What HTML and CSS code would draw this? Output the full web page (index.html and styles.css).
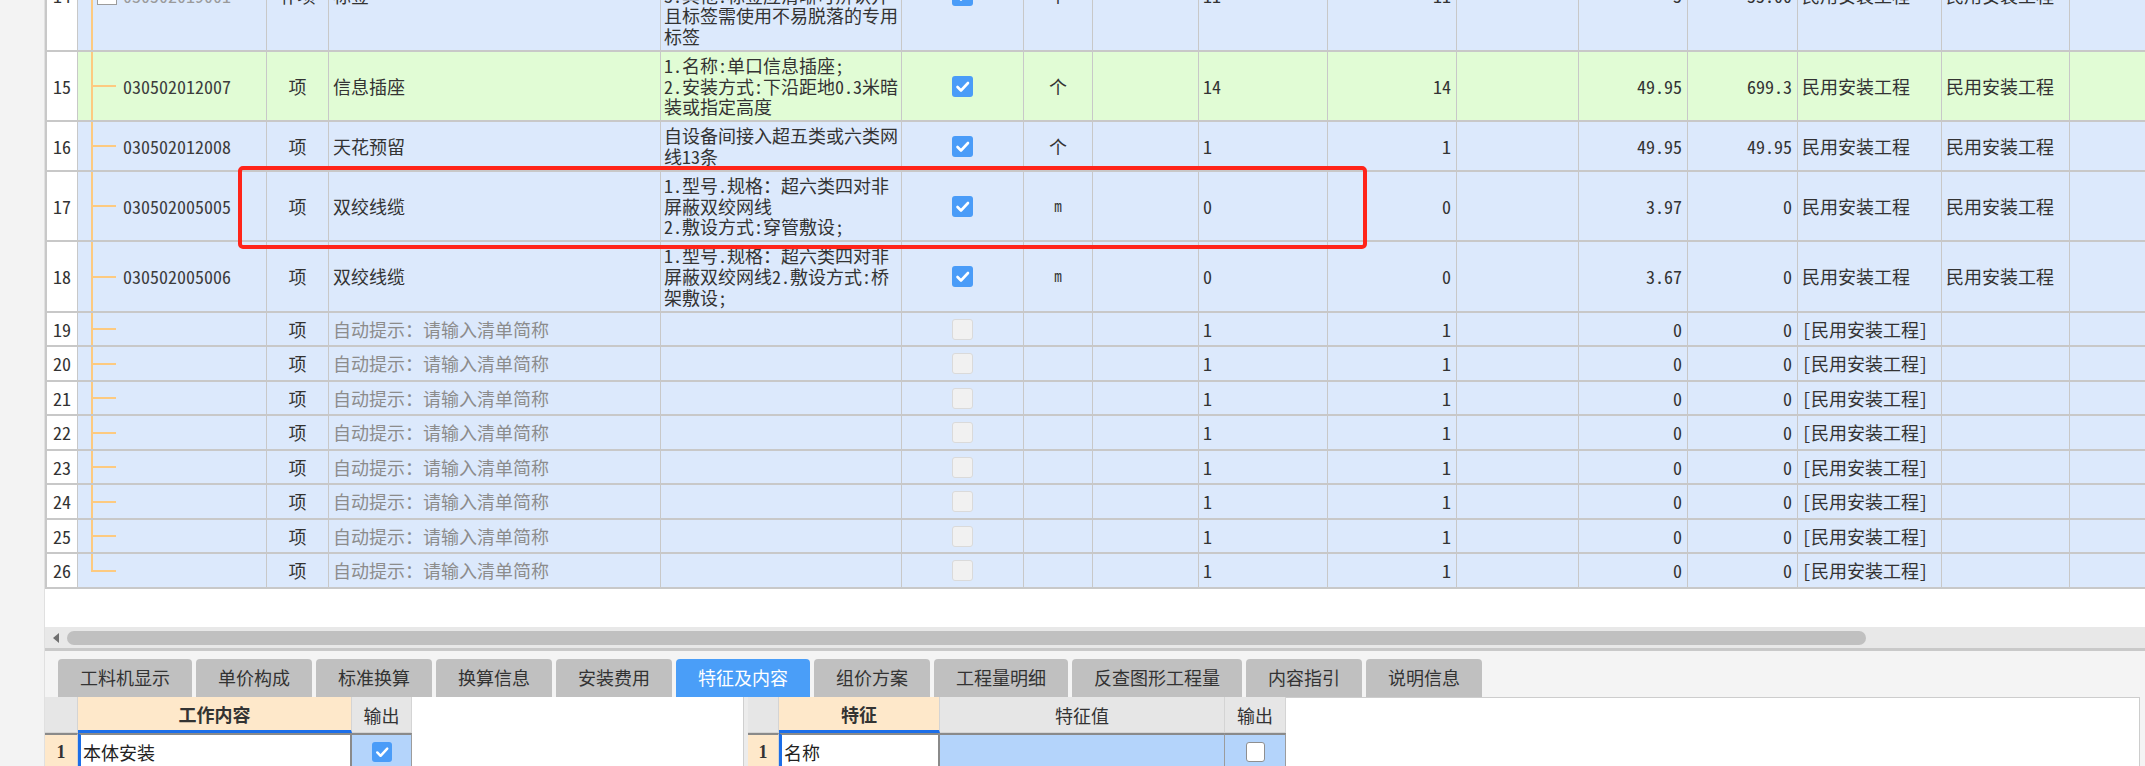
FILE: index.html
```html
<!DOCTYPE html>
<html lang="zh-CN">
<head>
<meta charset="utf-8">
<title>清单编辑</title>
<link rel="stylesheet" href="styles.css">
</head>
<body>
<div class="page">
  <div class="strip"></div>
  <div class="main">
    <div class="table-area">
      <div class="table">
        <div class="row h112">
          <div class="c rn">14</div>
          <div class="c code"><span class="tree nostub"></span><span class="box"></span><span class="gray">030502019001</span></div>
          <div class="c ctr">补项</div>
          <div class="c">标签</div>
          <div class="c desc">1.名称:标签<br>2.规格:线缆两端编号标识<br>3.其他:标签应清晰可辨认并<br>且标签需使用不易脱落的专用<br>标签</div>
          <div class="c ctr"><span class="cb on"><svg viewBox="0 0 21 21" width="21" height="21"><path d="M5.5 11l3.5 3.5 7-7.5" fill="none" stroke="#fff" stroke-width="2.6" stroke-linecap="round" stroke-linejoin="round"/></svg></span></div>
          <div class="c ctr">个</div>
          <div class="c"></div>
          <div class="c">11</div>
          <div class="c r">11</div>
          <div class="c"></div>
          <div class="c r">5</div>
          <div class="c r">55.00</div>
          <div class="c">民用安装工程</div>
          <div class="c">民用安装工程</div>
          <div class="c end"></div>
        </div>
        <div class="row green h70">
          <div class="c rn">15</div>
          <div class="c code"><span class="tree"></span>030502012007</div>
          <div class="c ctr">项</div>
          <div class="c">信息插座</div>
          <div class="c desc">1.名称:单口信息插座;<br>2.安装方式:下沿距地0.3米暗<br>装或指定高度</div>
          <div class="c ctr"><span class="cb on"><svg viewBox="0 0 21 21" width="21" height="21"><path d="M5.5 11l3.5 3.5 7-7.5" fill="none" stroke="#fff" stroke-width="2.6" stroke-linecap="round" stroke-linejoin="round"/></svg></span></div>
          <div class="c ctr">个</div>
          <div class="c"></div>
          <div class="c">14</div>
          <div class="c r">14</div>
          <div class="c"></div>
          <div class="c r">49.95</div>
          <div class="c r">699.3</div>
          <div class="c">民用安装工程</div>
          <div class="c">民用安装工程</div>
          <div class="c end"></div>
        </div>
        <div class="row h50">
          <div class="c rn">16</div>
          <div class="c code"><span class="tree"></span>030502012008</div>
          <div class="c ctr">项</div>
          <div class="c">天花预留</div>
          <div class="c desc">自设备间接入超五类或六类网<br>线13条</div>
          <div class="c ctr"><span class="cb on"><svg viewBox="0 0 21 21" width="21" height="21"><path d="M5.5 11l3.5 3.5 7-7.5" fill="none" stroke="#fff" stroke-width="2.6" stroke-linecap="round" stroke-linejoin="round"/></svg></span></div>
          <div class="c ctr">个</div>
          <div class="c"></div>
          <div class="c">1</div>
          <div class="c r">1</div>
          <div class="c"></div>
          <div class="c r">49.95</div>
          <div class="c r">49.95</div>
          <div class="c">民用安装工程</div>
          <div class="c">民用安装工程</div>
          <div class="c end"></div>
        </div>
        <div class="row h70">
          <div class="c rn">17</div>
          <div class="c code"><span class="tree"></span>030502005005</div>
          <div class="c ctr">项</div>
          <div class="c">双绞线缆</div>
          <div class="c desc">1.型号.规格：超六类四对非<br>屏蔽双绞网线<br>2.敷设方式:穿管敷设;</div>
          <div class="c ctr"><span class="cb on"><svg viewBox="0 0 21 21" width="21" height="21"><path d="M5.5 11l3.5 3.5 7-7.5" fill="none" stroke="#fff" stroke-width="2.6" stroke-linecap="round" stroke-linejoin="round"/></svg></span></div>
          <div class="c ctr unit-m">m</div>
          <div class="c"></div>
          <div class="c">0</div>
          <div class="c r">0</div>
          <div class="c"></div>
          <div class="c r">3.97</div>
          <div class="c r">0</div>
          <div class="c">民用安装工程</div>
          <div class="c">民用安装工程</div>
          <div class="c end"></div>
        </div>
        <div class="row h71">
          <div class="c rn">18</div>
          <div class="c code"><span class="tree"></span>030502005006</div>
          <div class="c ctr">项</div>
          <div class="c">双绞线缆</div>
          <div class="c desc">1.型号.规格：超六类四对非<br>屏蔽双绞网线2.敷设方式:桥<br>架敷设;</div>
          <div class="c ctr"><span class="cb on"><svg viewBox="0 0 21 21" width="21" height="21"><path d="M5.5 11l3.5 3.5 7-7.5" fill="none" stroke="#fff" stroke-width="2.6" stroke-linecap="round" stroke-linejoin="round"/></svg></span></div>
          <div class="c ctr unit-m">m</div>
          <div class="c"></div>
          <div class="c">0</div>
          <div class="c r">0</div>
          <div class="c"></div>
          <div class="c r">3.67</div>
          <div class="c r">0</div>
          <div class="c">民用安装工程</div>
          <div class="c">民用安装工程</div>
          <div class="c end"></div>
        </div>
        <div class="row h34">
          <div class="c rn">19</div><div class="c code"><span class="tree"></span></div><div class="c ctr">项</div><div class="c hint">自动提示：请输入清单简称</div><div class="c"></div><div class="c ctr"><span class="cb off"></span></div><div class="c"></div><div class="c"></div><div class="c">1</div><div class="c r">1</div><div class="c"></div><div class="c r">0</div><div class="c r">0</div><div class="c">[民用安装工程]</div><div class="c"></div><div class="c end"></div>
        </div>
        <div class="row h35">
          <div class="c rn">20</div><div class="c code"><span class="tree"></span></div><div class="c ctr">项</div><div class="c hint">自动提示：请输入清单简称</div><div class="c"></div><div class="c ctr"><span class="cb off"></span></div><div class="c"></div><div class="c"></div><div class="c">1</div><div class="c r">1</div><div class="c"></div><div class="c r">0</div><div class="c r">0</div><div class="c">[民用安装工程]</div><div class="c"></div><div class="c end"></div>
        </div>
        <div class="row h34">
          <div class="c rn">21</div><div class="c code"><span class="tree"></span></div><div class="c ctr">项</div><div class="c hint">自动提示：请输入清单简称</div><div class="c"></div><div class="c ctr"><span class="cb off"></span></div><div class="c"></div><div class="c"></div><div class="c">1</div><div class="c r">1</div><div class="c"></div><div class="c r">0</div><div class="c r">0</div><div class="c">[民用安装工程]</div><div class="c"></div><div class="c end"></div>
        </div>
        <div class="row h35">
          <div class="c rn">22</div><div class="c code"><span class="tree"></span></div><div class="c ctr">项</div><div class="c hint">自动提示：请输入清单简称</div><div class="c"></div><div class="c ctr"><span class="cb off"></span></div><div class="c"></div><div class="c"></div><div class="c">1</div><div class="c r">1</div><div class="c"></div><div class="c r">0</div><div class="c r">0</div><div class="c">[民用安装工程]</div><div class="c"></div><div class="c end"></div>
        </div>
        <div class="row h34">
          <div class="c rn">23</div><div class="c code"><span class="tree"></span></div><div class="c ctr">项</div><div class="c hint">自动提示：请输入清单简称</div><div class="c"></div><div class="c ctr"><span class="cb off"></span></div><div class="c"></div><div class="c"></div><div class="c">1</div><div class="c r">1</div><div class="c"></div><div class="c r">0</div><div class="c r">0</div><div class="c">[民用安装工程]</div><div class="c"></div><div class="c end"></div>
        </div>
        <div class="row h35">
          <div class="c rn">24</div><div class="c code"><span class="tree"></span></div><div class="c ctr">项</div><div class="c hint">自动提示：请输入清单简称</div><div class="c"></div><div class="c ctr"><span class="cb off"></span></div><div class="c"></div><div class="c"></div><div class="c">1</div><div class="c r">1</div><div class="c"></div><div class="c r">0</div><div class="c r">0</div><div class="c">[民用安装工程]</div><div class="c"></div><div class="c end"></div>
        </div>
        <div class="row h34">
          <div class="c rn">25</div><div class="c code"><span class="tree"></span></div><div class="c ctr">项</div><div class="c hint">自动提示：请输入清单简称</div><div class="c"></div><div class="c ctr"><span class="cb off"></span></div><div class="c"></div><div class="c"></div><div class="c">1</div><div class="c r">1</div><div class="c"></div><div class="c r">0</div><div class="c r">0</div><div class="c">[民用安装工程]</div><div class="c"></div><div class="c end"></div>
        </div>
        <div class="row h35">
          <div class="c rn">26</div><div class="c code"><span class="tree last"></span></div><div class="c ctr">项</div><div class="c hint">自动提示：请输入清单简称</div><div class="c"></div><div class="c ctr"><span class="cb off"></span></div><div class="c"></div><div class="c"></div><div class="c">1</div><div class="c r">1</div><div class="c"></div><div class="c r">0</div><div class="c r">0</div><div class="c">[民用安装工程]</div><div class="c"></div><div class="c end"></div>
        </div>
      </div>
    </div>

    <div class="hscroll">
      <span class="arrow"></span>
      <span class="thumb"></span>
    </div>

    <div class="tabs">
      <div class="tab">工料机显示</div>
      <div class="tab">单价构成</div>
      <div class="tab">标准换算</div>
      <div class="tab">换算信息</div>
      <div class="tab">安装费用</div>
      <div class="tab active">特征及内容</div>
      <div class="tab">组价方案</div>
      <div class="tab">工程量明细</div>
      <div class="tab">反查图形工程量</div>
      <div class="tab">内容指引</div>
      <div class="tab">说明信息</div>
    </div>

    <div class="panels">
      <div class="pleft">
        <div class="ptable lt">
          <div class="pc hd"></div>
          <div class="pc hd key">工作内容</div>
          <div class="pc hd">输出</div>
          <div class="pc rnum">1</div>
          <div class="pc edit">本体安装</div>
          <div class="pc val ctr"><span class="cb on small"><svg viewBox="0 0 21 21" width="20" height="20"><path d="M5.5 11l3.5 3.5 7-7.5" fill="none" stroke="#fff" stroke-width="2.6" stroke-linecap="round" stroke-linejoin="round"/></svg></span></div>
        </div>
        <div class="pblank"></div>
      </div>
      <div class="splitter"></div>
      <div class="pright">
        <div class="ptable rt">
          <div class="pc hd"></div>
          <div class="pc hd key">特征</div>
          <div class="pc hd">特征值</div>
          <div class="pc hd">输出</div>
          <div class="pc rnum">1</div>
          <div class="pc edit">名称</div>
          <div class="pc val"></div>
          <div class="pc val ctr"><span class="cb empty"></span></div>
        </div>
        <div class="pblank boxed"></div>
      </div>
    </div>
  </div>
  <div class="annot"></div>
</div>
</body>
</html>
```
FILE: styles.css
```css
* { box-sizing: border-box; margin: 0; padding: 0; }
html, body { width: 2145px; height: 766px; overflow: hidden; background: #fff; }
body {
  font-family: "Noto Sans Mono CJK SC", "Noto Sans CJK SC", sans-serif;
  font-size: 18px;
  color: #333;
}
.page { position: relative; display: flex; height: 766px; }
.strip { width: 45px; flex: none; background: #f3f3f3; border-right: 1px solid #e0e0e0; }
.main { flex: 1; display: flex; flex-direction: column; min-width: 0; }

/* main grid */
.table-area { height: 627px; flex: none; overflow: hidden; background: #fff; }
.table { border-left: 2px solid #c8c8c8; margin-top: -60px; }
.row {
  display: grid;
  grid-template-columns: 31px 189px 62px 332px 241px 122px 69px 106px 129px 129px 122px 109px 110px 144px 128px 1fr;
  background: #dce9fc;
}
.row.green { background: #e1fcd5; }
.h112 { height: 112px; }
.h70 { height: 70px; }
.h71 { height: 71px; }
.h50 { height: 50px; }
.h34 { height: 34px; }
.h35 { height: 35px; }
.c {
  display: flex;
  align-items: center;
  padding: 0 4px;
  border-right: 1px solid #c8c8c8;
  border-bottom: 2px solid #c8c8c8;
  white-space: nowrap;
  overflow: hidden;
  line-height: 20.7px;
}
.c.end { border-right: none; }
.rn { background: #fff; padding-left: 6px; }
.ctr { justify-content: center; }
.r { justify-content: flex-end; padding-right: 5px; }
.desc { padding-left: 3px; }
.hint { color: #8c8c8c; }
.gray { color: #9a9a9a; }
.unit-m { font-size: 15px; }

.code { padding-left: 13px; color: #3c3c3c; }
.tree {
  align-self: stretch;
  width: 25px;
  flex: none;
  margin-right: 7px;
  background:
    linear-gradient(#fdca80, #fdca80) 0 0 / 2px 100% no-repeat,
    linear-gradient(#fdca80, #fdca80) 0 50% / 25px 2px no-repeat;
}
.tree.last {
  background:
    linear-gradient(#fdca80, #fdca80) 0 0 / 2px calc(50% + 1px) no-repeat,
    linear-gradient(#fdca80, #fdca80) 0 50% / 25px 2px no-repeat;
}
.tree.nostub {
  width: 6px;
  margin-right: 0;
  background: linear-gradient(#fdca80, #fdca80) 0 0 / 2px 100% no-repeat;
}
.box { width: 20px; height: 20px; border: 1px solid #9c9c9c; background: #fff; flex: none; margin-right: 6px; }

/* checkboxes */
.cb { width: 21px; height: 21px; border-radius: 3px; flex: none; display: flex; align-items: center; justify-content: center; }
.cb.on { background: #4a9cf8; }
.cb.on.small { width: 20px; height: 20px; }
.cb.off { background: #f1f1f1; border: 1px solid #dadada; }
.cb.empty { width: 19px; height: 20px; background: #fff; border: 1px solid #8f8f8f; border-radius: 3px; }

/* horizontal scrollbar */
.hscroll {
  height: 24px;
  flex: none;
  display: flex;
  align-items: center;
  background: #e8e8e8;
  border-bottom: 3px solid #c9c9c9;
}
.arrow {
  width: 0; height: 0;
  margin-left: 8px;
  border-top: 5px solid transparent;
  border-bottom: 5px solid transparent;
  border-right: 6px solid #6f6f6f;
}
.thumb { width: 1799px; height: 14px; margin-left: 8px; border-radius: 7px; background: #c0c0c0; }

/* tabs */
.tabs {
  height: 46px;
  flex: none;
  display: flex;
  align-items: flex-end;
  gap: 4px;
  padding-left: 13px;
  background: #f4f4f4;
}
.tab {
  height: 38px;
  padding: 0 22px;
  line-height: 37px;
  border-radius: 4px 4px 0 0;
  background: #c0c0c0;
  color: #333;
  font-family: "Noto Sans CJK SC", sans-serif;
  font-size: 18px;
  white-space: nowrap;
}
.tab.active { background: #4a9ef8; color: #fff; }

/* bottom panels */
.panels { flex: 1; display: flex; min-height: 0; overflow: hidden; }
.pleft { width: 698px; flex: none; display: flex; background: #fff; }
.splitter { width: 5px; flex: none; background: #ececec; border-left: 1px solid #cfcfcf; }
.pright { flex: 1; display: flex; background: #f4f4f4; }
.ptable { display: grid; grid-template-rows: 36px 36px; flex: none; font-family: "Noto Sans CJK SC", sans-serif; }
.ptable.lt { grid-template-columns: 33px 274px 60px; }
.ptable.rt { grid-template-columns: 31px 161px 285px 61px; }
.pc { display: flex; align-items: center; white-space: nowrap; overflow: hidden; }
.pc.hd {
  justify-content: center;
  background: #e6e6e6;
  border-right: 1px solid #d4d4d4;
  border-bottom: 1px solid #d4d4d4;
  color: #333;
}
.pc.hd.key { background: #fee8ca; font-weight: bold; border-bottom: 3px solid #1c6ee8; }
.pc.rnum {
  justify-content: center;
  background: #fee8ca;
  border-top: 2px solid #8a8a8a;
  border-right: 1px solid #d4d4d4;
  font-family: "Liberation Serif", serif;
  font-weight: bold;
}
.pc.edit {
  background: #fff;
  border-top: 2px solid #8a8a8a;
  border-left: 3px solid #1c6ee8;
  border-right: 2px solid #8a8a8a;
  padding-left: 2px;
  color: #222;
}
.pc.val { background: #b4d4fb; border-top: 2px solid #8a8a8a; border-right: 1px solid #9c9c9c; }
.pc.ctr { justify-content: center; }
.pblank { flex: 1; background: #fff; }
.pblank.boxed { border-top: 1px solid #cdcdcd; border-right: 1px solid #cdcdcd; margin-right: 5px; }

/* red annotation frame */
.annot {
  position: absolute;
  left: 238px;
  top: 166px;
  width: 1129px;
  height: 83px;
  border: 4px solid #ff2419;
  border-radius: 5px;
}
```
